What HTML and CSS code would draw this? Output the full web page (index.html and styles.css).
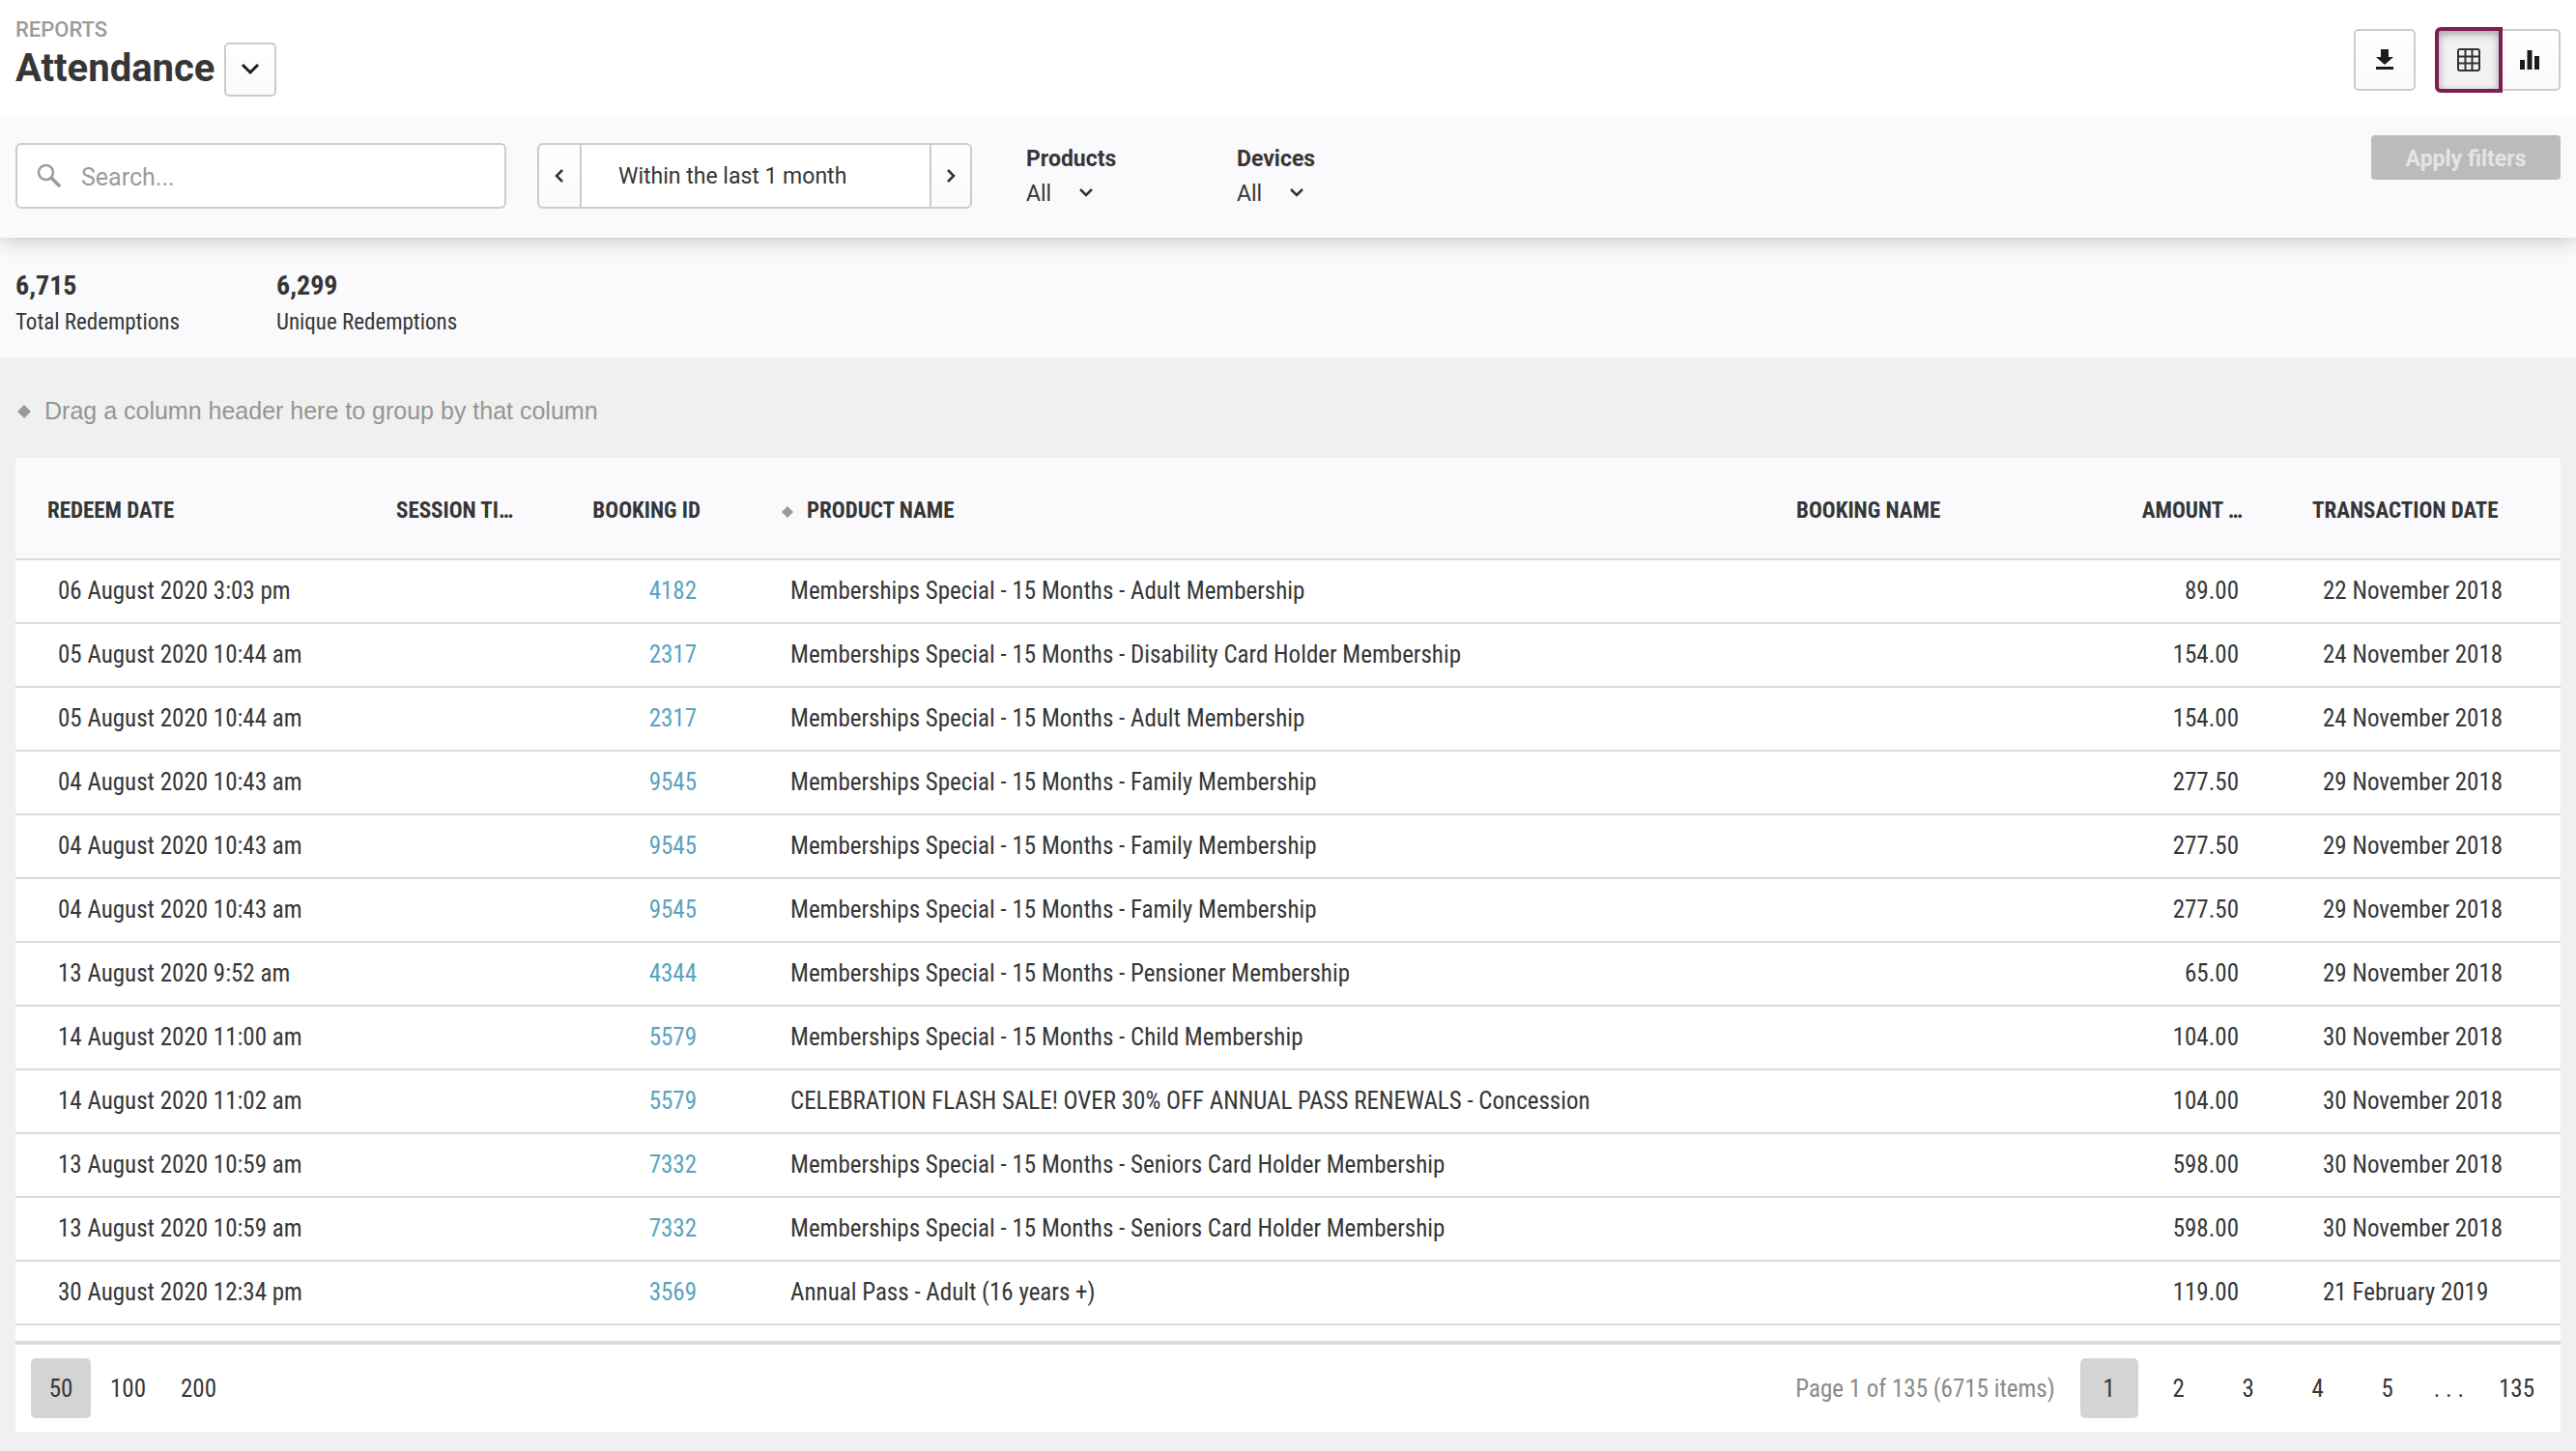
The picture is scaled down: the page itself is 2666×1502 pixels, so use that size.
FILE: index.html
```html
<!DOCTYPE html>
<html lang="en">
<head>
  <meta charset="UTF-8">
  <meta name="viewport" content="width=device-width, initial-scale=1">
  <title>Attendance</title>
  <link rel="stylesheet" href="styles.css">
</head>
<body>
  <header class="page-header">
    <div>
      <div class="breadcrumb">REPORTS</div>
      <div class="title-row">
        <h1>Attendance</h1>
        <button type="button" class="btn title-btn" aria-label="Choose report">
          <svg width="20" height="14" viewBox="0 0 20 14"><path d="M2 2l8 8 8-8" fill="none" stroke="#1c1c1c" stroke-width="3"/></svg>
        </button>
      </div>
    </div>
    <div class="actions">
      <button type="button" class="btn icon-btn" aria-label="Download">
        <svg width="18" height="22" viewBox="0 0 18 22" fill="#1c1c1c"><path d="M5 0h8v8h5l-9 8-9-8h5z"/><path d="M0 18h18v3H0z"/></svg>
      </button>
      <div class="btn-group">
        <button type="button" class="btn icon-btn active" aria-label="Table view">
          <svg width="24" height="24" viewBox="0 0 24 24"><g fill="none" stroke="#333" stroke-width="2"><rect x="1" y="1" width="22" height="22" rx="2"/><path d="M8.5 1v22M15.5 1v22M1 8.5h22M1 15.5h22"/></g></svg>
        </button>
        <button type="button" class="btn icon-btn chart-btn" aria-label="Chart view">
          <svg width="20" height="20" viewBox="0 0 20 20" fill="#1c1c1c"><path d="M0 10h5v10H0zM7.5 0h5v20h-5zM15 6h5v14h-5z"/></svg>
        </button>
      </div>
    </div>
  </header>

  <section class="filters">
    <div class="search">
      <svg width="26" height="26" viewBox="0 0 26 26" fill="none" stroke="#9b9b9b"><circle cx="9.500" cy="9.500" r="7.500" stroke-width="2.500"/><path d="M15 15l9 9" stroke-width="3.500"/></svg>
      <input type="text" placeholder="Search..." aria-label="Search">
    </div>
    <div class="range">
      <button type="button" class="btn prev" aria-label="Previous period">
        <svg width="12" height="16" viewBox="0 0 12 16"><path d="M9 2L3 8l6 6" fill="none" stroke="#333" stroke-width="2.500"/></svg>
      </button>
      <input type="text" value="Within the last 1 month" aria-label="Date range" readonly>
      <button type="button" class="btn next" aria-label="Next period">
        <svg width="12" height="16" viewBox="0 0 12 16"><path d="M3 2l6 6-6 6" fill="none" stroke="#333" stroke-width="2.500"/></svg>
      </button>
    </div>
    <div class="filter">
      <label for="products">Products</label>
      <div class="select">
        <select id="products"><option>All</option></select>
        <svg width="16" height="12" viewBox="0 0 16 12"><path d="M2 2l6 6 6-6" fill="none" stroke="#333" stroke-width="2.500"/></svg>
      </div>
    </div>
    <div class="filter">
      <label for="devices">Devices</label>
      <div class="select">
        <select id="devices"><option>All</option></select>
        <svg width="16" height="12" viewBox="0 0 16 12"><path d="M2 2l6 6 6-6" fill="none" stroke="#333" stroke-width="2.500"/></svg>
      </div>
    </div>
    <button type="button" class="apply" disabled>Apply filters</button>
  </section>

  <section class="stats">
    <div class="stat">
      <strong>6,715</strong>
      <span>Total Redemptions</span>
    </div>
    <div class="stat">
      <strong>6,299</strong>
      <span>Unique Redemptions</span>
    </div>
  </section>

  <main>
    <div class="group-panel">
      <svg class="diamond" width="14" height="14" viewBox="0 0 14 14"><path d="M7 0l7 7-7 7-7-7z"/></svg>
      Drag a column header here to group by that column
    </div>

    <div class="grid">
      <table>
        <colgroup>
          <col class="col-redeem">
          <col class="col-session">
          <col class="col-id">
          <col>
          <col class="col-name">
          <col class="col-amount">
          <col class="col-date">
        </colgroup>
        <thead>
          <tr>
            <th>REDEEM DATE</th>
            <th>SESSION TI…</th>
            <th class="num">BOOKING ID</th>
            <th class="product"><svg class="diamond" width="12" height="12" viewBox="0 0 14 14"><path d="M7 0l7 7-7 7-7-7z"/></svg>PRODUCT NAME</th>
            <th>BOOKING NAME</th>
            <th class="num">AMOUNT …</th>
            <th class="date">TRANSACTION DATE</th>
          </tr>
        </thead>
        <tbody>
          <tr><td>06 August 2020 3:03 pm</td><td></td><td class="num"><a href="#">4182</a></td><td class="product">Memberships Special - 15 Months - Adult Membership</td><td></td><td class="num">89.00</td><td class="date">22 November 2018</td></tr>
          <tr><td>05 August 2020 10:44 am</td><td></td><td class="num"><a href="#">2317</a></td><td class="product">Memberships Special - 15 Months - Disability Card Holder Membership</td><td></td><td class="num">154.00</td><td class="date">24 November 2018</td></tr>
          <tr><td>05 August 2020 10:44 am</td><td></td><td class="num"><a href="#">2317</a></td><td class="product">Memberships Special - 15 Months - Adult Membership</td><td></td><td class="num">154.00</td><td class="date">24 November 2018</td></tr>
          <tr><td>04 August 2020 10:43 am</td><td></td><td class="num"><a href="#">9545</a></td><td class="product">Memberships Special - 15 Months - Family Membership</td><td></td><td class="num">277.50</td><td class="date">29 November 2018</td></tr>
          <tr><td>04 August 2020 10:43 am</td><td></td><td class="num"><a href="#">9545</a></td><td class="product">Memberships Special - 15 Months - Family Membership</td><td></td><td class="num">277.50</td><td class="date">29 November 2018</td></tr>
          <tr><td>04 August 2020 10:43 am</td><td></td><td class="num"><a href="#">9545</a></td><td class="product">Memberships Special - 15 Months - Family Membership</td><td></td><td class="num">277.50</td><td class="date">29 November 2018</td></tr>
          <tr><td>13 August 2020 9:52 am</td><td></td><td class="num"><a href="#">4344</a></td><td class="product">Memberships Special - 15 Months - Pensioner Membership</td><td></td><td class="num">65.00</td><td class="date">29 November 2018</td></tr>
          <tr><td>14 August 2020 11:00 am</td><td></td><td class="num"><a href="#">5579</a></td><td class="product">Memberships Special - 15 Months - Child Membership</td><td></td><td class="num">104.00</td><td class="date">30 November 2018</td></tr>
          <tr><td>14 August 2020 11:02 am</td><td></td><td class="num"><a href="#">5579</a></td><td class="product">CELEBRATION FLASH SALE! OVER 30% OFF ANNUAL PASS RENEWALS - Concession</td><td></td><td class="num">104.00</td><td class="date">30 November 2018</td></tr>
          <tr><td>13 August 2020 10:59 am</td><td></td><td class="num"><a href="#">7332</a></td><td class="product">Memberships Special - 15 Months - Seniors Card Holder Membership</td><td></td><td class="num">598.00</td><td class="date">30 November 2018</td></tr>
          <tr><td>13 August 2020 10:59 am</td><td></td><td class="num"><a href="#">7332</a></td><td class="product">Memberships Special - 15 Months - Seniors Card Holder Membership</td><td></td><td class="num">598.00</td><td class="date">30 November 2018</td></tr>
          <tr><td>30 August 2020 12:34 pm</td><td></td><td class="num"><a href="#">3569</a></td><td class="product">Annual Pass - Adult (16 years +)</td><td></td><td class="num">119.00</td><td class="date">21 February 2019</td></tr>
        </tbody>
      </table>

      <footer class="pager">
        <div class="sizes">
          <button type="button" class="selected">50</button>
          <button type="button">100</button>
          <button type="button">200</button>
        </div>
        <div class="pages">
          <span class="info">Page 1 of 135 (6715 items)</span>
          <button type="button" class="selected">1</button>
          <button type="button">2</button>
          <button type="button">3</button>
          <button type="button">4</button>
          <button type="button">5</button>
          <span class="dots">. . .</span>
          <button type="button">135</button>
        </div>
      </footer>
    </div>
  </main>
</body>
</html>
```

FILE: styles.css
```css
* {
  box-sizing: border-box;
}

body {
  margin: 0;
  background-color: #f0f0f0;
  color: #363636;
  font-family: Roboto, "Liberation Sans", sans-serif;
  font-size: 23px;
}

button, input, select {
  font: inherit;
  color: inherit;
}

button {
  cursor: pointer;
}

svg {
  display: block;
  flex: none;
}

.btn {
  display: flex;
  align-items: center;
  justify-content: center;
  padding: 0;
  border: 2px solid #ccc;
  border-radius: 5px;
  background: linear-gradient(#fff, #fafafc);
}

/* header */
.page-header {
  display: flex;
  justify-content: space-between;
  height: 120px;
  padding: 18px 16px 0;
  background-color: #fff;
}

.breadcrumb {
  color: #9b9b9b;
  font-size: 22px;
  font-weight: 500;
  line-height: 26px;
}

.title-row {
  display: flex;
  gap: 10px;
}

h1 {
  margin: 0;
  font-size: 40px;
  font-weight: 700;
  line-height: 54px;
}

.title-btn {
  width: 54px;
  height: 56px;
}

.actions {
  display: flex;
  gap: 20px;
  padding-top: 12px;
}

.icon-btn {
  width: 64px;
  height: 64px;
}

.btn-group {
  display: flex;
}

.icon-btn.active {
  width: 70px;
  height: 68px;
  margin-top: -2px;
  border: 4px solid #7b1f52;
  border-radius: 6px 0 0 6px;
  background: #f2f2f2;
  box-shadow: inset 0 3px 8px rgba(0, 0, 0, 0.35);
}

.chart-btn {
  width: 60px;
  padding-right: 2px;
  border-left: none;
  border-radius: 0 5px 5px 0;
}

/* filters */
.filters {
  position: relative;
  display: flex;
  align-items: flex-start;
  height: 126px;
  padding: 28px 16px 0;
  background-color: #fafafc;
  box-shadow: 0 4px 20px rgba(0, 0, 0, 0.2);
  clip-path: inset(0 0 -30px 0);
}

.search {
  display: flex;
  align-items: center;
  gap: 20px;
  width: 508px;
  height: 68px;
  margin-right: 32px;
  padding: 0 20px;
  border: 2px solid #ccc;
  border-radius: 6px;
  background-color: #fff;
}

.search input {
  flex: 1;
  min-width: 0;
  padding: 2px 0 0;
  border: none;
  outline: none;
  font-size: 25px;
}

.search input::placeholder {
  color: #9b9b9b;
}

.range {
  display: flex;
  width: 450px;
  height: 68px;
  margin-right: 56px;
}

.range .prev {
  width: 46px;
  border-radius: 6px 0 0 6px;
}

.range .next {
  width: 44px;
  border-radius: 0 6px 6px 0;
}

.range input {
  flex: 1;
  min-width: 0;
  padding: 0 38px;
  border: solid #ccc;
  border-width: 2px 0;
  outline: none;
}

.filter {
  width: 218px;
}

.filter label {
  display: block;
  font-weight: 700;
  line-height: 34px;
}

.select {
  position: relative;
  width: 74px;
}

.select select {
  display: block;
  width: 100%;
  height: 36px;
  padding: 0;
  border: none;
  background: none;
  appearance: none;
}

.select svg {
  position: absolute;
  right: 4px;
  top: 12px;
  pointer-events: none;
}

.apply {
  width: 196px;
  height: 46px;
  margin-top: -8px;
  margin-left: auto;
  padding: 2px 0 0;
  border: none;
  border-radius: 4px;
  background-color: #bbb;
  color: #e4e4e6;
  font-weight: 700;
}

/* totals */
.stats {
  display: flex;
  height: 124px;
  padding: 31px 16px 0;
  background-color: #fafafc;
}

.stat {
  width: 270px;
  font-family: "Roboto Condensed", Roboto, sans-serif;
}

.stat strong, .stat span {
  display: block;
  line-height: 38px;
}

.stat strong {
  font-size: 28px;
}

/* grid */
main {
  padding: 0 16px 20px;
}

.group-panel {
  display: flex;
  align-items: center;
  gap: 14px;
  height: 104px;
  padding: 7px 2px 0;
  color: #959595;
  font-family: "Liberation Sans", sans-serif;
  font-size: 25px;
}

.diamond {
  fill: #999;
}

.grid {
  background-color: #fff;
  font-family: "Roboto Condensed", Roboto, sans-serif;
  font-size: 25px;
}

table {
  width: 100%;
  table-layout: fixed;
  border-collapse: separate;
  border-spacing: 0;
}

.col-redeem { width: 361px; }
.col-session { width: 200px; }
.col-id { width: 181px; }
.col-name { width: 354px; }
.col-amount { width: 174px; }
.col-date { width: 296px; }

th, td {
  border-bottom: 2px solid #dcdcdc;
  text-align: left;
  white-space: nowrap;
}

th {
  height: 106px;
  padding: 4px 33px 0;
  background-color: #fafafc;
  font-size: 23px;
  font-weight: 700;
}

td {
  height: 66px;
  padding: 0 44px 2px;
}

th.num {
  padding-left: 0;
  text-align: right;
}

td.num {
  padding-left: 0;
  padding-right: 37px;
  text-align: right;
}

th.product {
  padding-left: 51px;
}

th.product .diamond {
  display: inline-block;
  margin-right: 14px;
}

td.product {
  padding-left: 60px;
}

th.date {
  padding-left: 39px;
}

td.date {
  padding-left: 50px;
}

td a {
  color: #5ba2bf;
  text-decoration: none;
}

/* pager */
.pager {
  display: flex;
  justify-content: space-between;
  margin-top: 16px;
  padding: 14px 16px;
  border-top: 4px solid #dcdcdc;
}

.pager button {
  min-width: 60px;
  height: 62px;
  padding: 0 16px;
  border: none;
  border-radius: 5px;
  background: none;
}

.pager .selected {
  background-color: #d4d4d4;
}

.sizes {
  display: flex;
  gap: 4px;
}

.sizes button {
  min-width: 62px;
}

.pages {
  display: flex;
  align-items: center;
  gap: 12px;
  margin-right: -5px;
}

.info {
  margin-right: 14px;
  color: #8a8a8a;
}

.dots {
  margin: 0 8px 0 6px;
}
```
